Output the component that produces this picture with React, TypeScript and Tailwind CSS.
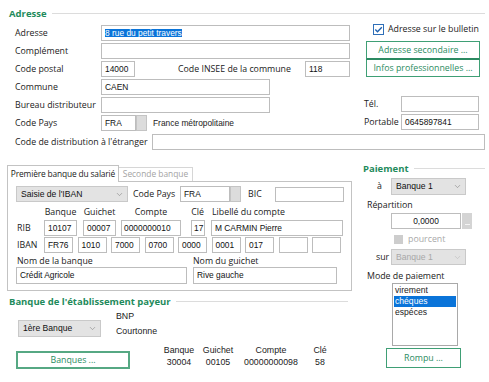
import { ChevronDown } from "lucide-react";

// WinDev-style employee address / bank form, recreated with flow layout.

function SectionTitle({ title, className = "" }: { title: string; className?: string }) {
  return (
    <div className={`flex h-[11px] items-center ${className}`}>
      <span className="font-bold text-[9.5px] text-[#1f8b5c]">{title}</span>
      <div className="ml-[5px] h-px flex-1 bg-[#dcdcdc]" />
    </div>
  );
}

function Field({ className = "", children }: { className?: string; children?: React.ReactNode }) {
  return (
    <div
      className={`flex shrink-0 items-center overflow-hidden whitespace-nowrap border border-[#bdbdbd] bg-white font-['Liberation_Sans'] text-[8.4px] text-[#111] ${className.includes("pl-") ? "" : "pl-[3px]"} ${className}`}
    >
      {children}
    </div>
  );
}

function Dots() {
  return <div className="h-full w-[11px] shrink-0 border border-[#c4c4c4] bg-[#dcdcdc]" />;
}

function Select({ className = "", value, disabled = false }: { className?: string; value: string; disabled?: boolean }) {
  return (
    <div
      className={`flex shrink-0 items-center justify-between border border-[#c9c9c9] bg-[#e3e3e3] pl-[4px] pr-[3px] font-['Liberation_Sans'] text-[8.6px] ${disabled ? "text-[#a8a8a8]" : "text-[#111]"} ${className}`}
    >
      <span>{value}</span>
      <ChevronDown size={9} strokeWidth={1.4} className={disabled ? "text-[#b5b5b5]" : "text-[#777]"} />
    </div>
  );
}

function GreenButton({ className = "", label }: { className?: string; label: string }) {
  return (
    <div
      className={`flex shrink-0 items-center justify-center border border-[#3f9f75] bg-white text-[8.8px] text-[#2b8c61] ${className}`}
    >
      {label}
    </div>
  );
}

function Row({ label, children }: { label: string; children: React.ReactNode }) {
  return (
    <div className="flex h-[16px] items-center">
      <span className="w-[86px] shrink-0">{label}</span>
      {children}
    </div>
  );
}

export default function App() {
  return (
    <div className="h-[382px] w-[489px] overflow-hidden whitespace-nowrap bg-white font-['Open_Sans'] text-[8.8px] leading-none text-[#222]">
      {/* Adresse */}
      <div className="pl-[9px] pr-[4px] pt-[8px]">
        <SectionTitle title="Adresse" />
      </div>

      <div className="mt-[5px] flex">
        <div className="flex w-[350px] flex-col gap-[2px] pl-[15px] pt-[1px]">
          <Row label="Adresse">
            <Field className="h-[16px] w-[249px]">
              <span className="bg-[#0a74d9] text-white">8 rue du petit travers</span>
            </Field>
          </Row>
          <Row label="Complément">
            <Field className="h-[16px] w-[249px]" />
          </Row>
          <Row label="Code postal">
            <Field className="h-[16px] w-[34px]">14000</Field>
            <span className="ml-[43px] w-[127px] shrink-0">Code INSEE de la commune</span>
            <Field className="h-[16px] w-[45px]">118</Field>
          </Row>
          <Row label="Commune">
            <Field className="h-[16px] w-[169px]">CAEN</Field>
          </Row>
          <Row label="Bureau distributeur">
            <Field className="h-[16px] w-[169px]" />
          </Row>
          <Row label="Code Pays">
            <Field className="h-[16px] w-[35px]">FRA</Field>
            <Dots />
            <span className="ml-[6px] font-['Liberation_Sans'] text-[8.4px]">France métropolitaine</span>
          </Row>
        </div>

        <div className="ml-[14px] flex w-[121px] flex-col">
          <div className="flex h-[11px] items-center pl-[9px]">
            <svg width="11" height="11" viewBox="0 0 11 11" className="shrink-0">
              <rect x="0.5" y="0.5" width="10" height="10" fill="#fff" stroke="#2f6fb8" />
              <path d="M2.3 5.6 L4.5 7.7 L8.8 3.2" fill="none" stroke="#1d5fae" strokeWidth="1.4" />
            </svg>
            <span className="ml-[4px]">Adresse sur le bulletin</span>
          </div>
          <GreenButton className="ml-[2px] mt-[6px] h-[19px] w-[114px] border-b-2 border-b-[#2c8a61]" label="Adresse secondaire ..." />
          <GreenButton className="ml-[2px] h-[17px] w-[114px] border-t-0" label="Infos professionnelles ..." />
          <div className="mt-[19px] flex h-[16px] items-center">
            <span className="w-[37px] shrink-0">Tél.</span>
            <Field className="h-[16px] w-[78px]" />
          </div>
          <div className="mt-[2px] flex h-[16px] items-center">
            <span className="w-[37px] shrink-0">Portable</span>
            <Field className="h-[16px] w-[78px]">0645897841</Field>
          </div>
        </div>
      </div>

      <div className="mt-[3px] flex h-[16px] items-center pl-[15px]">
        <span className="w-[137px] shrink-0">Code de distribution à l'étranger</span>
        <Field className="h-[16px] w-[333px]" />
      </div>

      {/* Lower half */}
      <div className="mt-[13px] flex">
        <div className="ml-[7px] flex w-[345px] flex-col">
          {/* Tabs */}
          <div className="relative z-10 mt-[2px] flex h-[16px] items-end">
            <div className="-mb-px flex h-[17px] w-[112px] items-center justify-center overflow-hidden border border-b-0 border-[#c3c3c3] bg-white text-[8.4px] tracking-[-0.15px]">
              Première banque du salarié
            </div>
            <div className="flex h-[14px] w-[74px] items-center justify-center overflow-hidden border border-b-0 border-l-0 border-[#d6d6d6] text-[8.4px] text-[#a3a3a3]">
              Seconde banque
            </div>
          </div>
          <div className="h-[110px] w-[345px] border border-[#c3c3c3] pl-[8px] pt-[4px]">
            <div className="flex h-[16px] items-center">
              <Select className="h-[16px] w-[112px]" value="Saisie de l'IBAN" />
              <span className="ml-[5px] w-[47px] shrink-0">Code Pays</span>
              <Field className="h-[16px] w-[50px]">FRA</Field>
              <Dots />
              <span className="ml-[7px] w-[27px] shrink-0">BIC</span>
              <Field className="h-[15px] w-[69px]" />
            </div>

            <div className="mt-[5px] flex h-[10px] items-center">
              <span className="w-[28px] shrink-0" />
              <span className="w-[33px] shrink-0 text-center">Banque</span>
              <span className="ml-[6px] w-[33px] shrink-0 text-center">Guichet</span>
              <span className="ml-[5px] w-[60px] shrink-0 text-center">Compte</span>
              <span className="ml-[10px] w-[13px] shrink-0 text-center">Clé</span>
              <span className="ml-[8px]">Libellé du compte</span>
            </div>

            <div className="mt-[3px] flex h-[16px] items-center">
              <span className="w-[28px] shrink-0 pl-[1px]">RIB</span>
              <Field className="h-[16px] w-[33px]">10107</Field>
              <Field className="ml-[6px] h-[16px] w-[33px]">00007</Field>
              <Field className="ml-[5px] h-[16px] w-[60px] pl-[2px]">0000000010</Field>
              <Field className="ml-[10px] h-[16px] w-[14px] pl-[2px]">17</Field>
              <Field className="ml-[6px] h-[16px] w-[132px]">M CARMIN Pierre</Field>
            </div>

            <div className="mt-[1px] flex h-[16px] items-center gap-[4.5px]">
              <span className="-mr-[4.5px] w-[28px] shrink-0 pl-[1px]">IBAN</span>
              {["FR76", "1010", "7000", "0700", "0000", "0001", "017", "", ""].map((v, i) => (
                <Field key={i} className="h-[16px] w-[29px]">
                  {v}
                </Field>
              ))}
            </div>

            <div className="mt-[3px] flex h-[10px] items-center">
              <span className="w-[177px] shrink-0 pl-[1px]">Nom de la banque</span>
              <span>Nom du guichet</span>
            </div>
            <div className="mt-[1px] flex h-[17px] items-center">
              <Field className="h-[17px] w-[171px]">Crédit Agricole</Field>
              <Field className="ml-[6px] h-[17px] w-[144px]">Rive gauche</Field>
            </div>
          </div>

          {/* Banque de l'établissement payeur */}
          <SectionTitle title="Banque de l'établissement payeur" className="mt-[5px] w-[341px] pl-[2px]" />
          <div className="mt-[4px] flex h-[26px]">
            <Select className="ml-[11px] mt-[9px] h-[17px] w-[83px]" value="1ère Banque" />
            <div className="ml-[15px] flex flex-col font-['Liberation_Sans'] text-[8.8px]">
              <span className="flex h-[10px] items-center">BNP</span>
              <span className="mt-[5px] flex h-[10px] items-center">Courtonne</span>
            </div>
          </div>
          <div className="mt-[8px] flex">
            <GreenButton className="ml-[9px] mt-[6px] h-[18px] w-[114px] border-2 border-[#56a883]" label="Banques ..." />
            <div className="ml-[30px] flex font-['Liberation_Sans'] text-[8.8px]">
              {[
                ["Banque", "30004", "w-[38px]", ""],
                ["Guichet", "00105", "w-[38px]", "ml-[1px]"],
                ["Compte", "00000000098", "w-[54px]", "ml-[7px]"],
                ["Clé", "58", "w-[24px]", "ml-[10px]"],
              ].map(([h, v, w, m]) => (
                <div key={h} className={`flex flex-col items-center ${w} ${m}`}>
                  <span className="flex h-[10px] items-center">{h}</span>
                  <span className="mt-[2px] flex h-[10px] items-center">{v}</span>
                </div>
              ))}
            </div>
          </div>
        </div>

        {/* Paiement */}
        <div className="ml-[11px] flex w-[122px] flex-col">
          <SectionTitle title="Paiement" />
          <div className="mt-[4px] flex h-[17px] items-center">
            <span className="w-[28px] shrink-0 pl-[14px]">à</span>
            <Select className="h-[17px] w-[75px]" value="Banque 1" />
          </div>
          <div className="mt-[5px] flex h-[10px] items-center pl-[4px]">Répartition</div>
          <div className="mt-[3px] flex h-[16px] items-center pl-[28px]">
            <Field className="h-[16px] w-[70px] justify-center pl-0">0,0000</Field>
            <div className="ml-[1px] flex h-[16px] w-[10px] items-end justify-center bg-[#d4d4d4] pb-[4px]">
              <div className="h-px w-[5px] bg-[#f4f4f4]" />
            </div>
          </div>
          <div className="mt-[5px] flex h-[10px] items-center pl-[31px]">
            <div className="h-[9px] w-[9px] bg-[#cdcdcd]" />
            <span className="ml-[5px] text-[#a9a9a9]">pourcent</span>
          </div>
          <div className="mt-[5px] flex h-[16px] items-center">
            <span className="w-[28px] shrink-0 pl-[13px]">sur</span>
            <Select className="h-[16px] w-[75px]" value="Banque 1" disabled />
          </div>
          <div className="mt-[6px] flex h-[10px] items-center pl-[4px]">Mode de paiement</div>
          <div className="ml-[29px] mt-[2px] h-[63px] w-[66px] border border-[#a9a9a9] bg-white px-px pt-px font-['Liberation_Sans'] text-[8.6px]">
            <div className="flex h-[11px] items-center pl-[1px]">virement</div>
            <div className="flex h-[11px] items-center bg-[#0a74d9] pl-[1px] text-white">chéques</div>
            <div className="flex h-[11px] items-center pl-[1px]">espéces</div>
          </div>
          <GreenButton className="ml-[23px] mt-[2px] h-[20px] w-[75px]" label="Rompu ..." />
        </div>
      </div>
    </div>
  );
}
